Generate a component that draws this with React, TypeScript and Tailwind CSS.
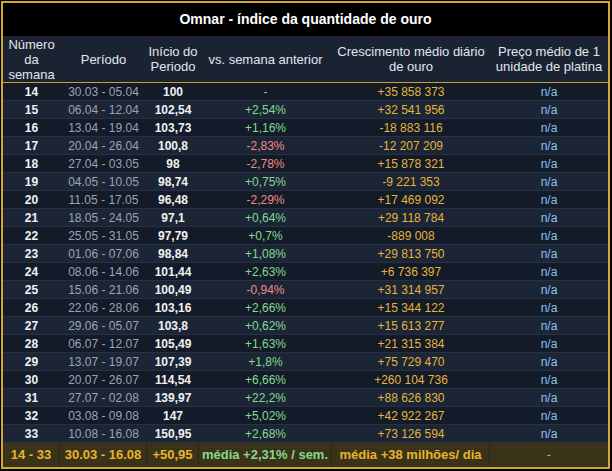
const rows: [string, string, string, string, string][] = [
  ["14", "30.03 - 05.04", "100", "-", "+35 858 373"],
  ["15", "06.04 - 12.04", "102,54", "+2,54%", "+32 541 956"],
  ["16", "13.04 - 19.04", "103,73", "+1,16%", "-18 883 116"],
  ["17", "20.04 - 26.04", "100,8", "-2,83%", "-12 207 209"],
  ["18", "27.04 - 03.05", "98", "-2,78%", "+15 878 321"],
  ["19", "04.05 - 10.05", "98,74", "+0,75%", "-9 221 353"],
  ["20", "11.05 - 17.05", "96,48", "-2,29%", "+17 469 092"],
  ["21", "18.05 - 24.05", "97,1", "+0,64%", "+29 118 784"],
  ["22", "25.05 - 31.05", "97,79", "+0,7%", "-889 008"],
  ["23", "01.06 - 07.06", "98,84", "+1,08%", "+29 813 750"],
  ["24", "08.06 - 14.06", "101,44", "+2,63%", "+6 736 397"],
  ["25", "15.06 - 21.06", "100,49", "-0,94%", "+31 314 957"],
  ["26", "22.06 - 28.06", "103,16", "+2,66%", "+15 344 122"],
  ["27", "29.06 - 05.07", "103,8", "+0,62%", "+15 613 277"],
  ["28", "06.07 - 12.07", "105,49", "+1,63%", "+21 315 384"],
  ["29", "13.07 - 19.07", "107,39", "+1,8%", "+75 729 470"],
  ["30", "20.07 - 26.07", "114,54", "+6,66%", "+260 104 736"],
  ["31", "27.07 - 02.08", "139,97", "+22,2%", "+88 626 830"],
  ["32", "03.08 - 09.08", "147", "+5,02%", "+42 922 267"],
  ["33", "10.08 - 16.08", "150,95", "+2,68%", "+73 126 594"],
];

const cols = "grid grid-cols-[57px_87px_52px_133px_158px_118px]";

function changeColor(v: string) {
  if (v === "-") return "text-[#86d98f]";
  return v.startsWith("-") ? "text-[#f08a80]" : "text-[#86d98f]";
}

export default function App() {
  return (
    <div
      className="w-[612px] h-[471px] bg-black pt-px pl-px"
      style={{ fontFamily: '"Liberation Sans", Arial, sans-serif' }}
    >
      <div className="w-[609px] h-[468px] border-2 border-[#d2a631] bg-[#131a28] flex flex-col">
        {/* Title */}
        <div className="h-[33px] bg-black flex items-center justify-center text-[14px] font-bold text-white">
          Omnar - índice da quantidade de ouro
        </div>

        {/* Header */}
        <div className={`${cols} h-[47px] bg-[#1b2333] border-b border-[#c9a02e] text-[13px] leading-[15px] text-[#e2e6ec] text-center items-center`}>
          <div>Número<br />da<br />semana</div>
          <div>Período</div>
          <div>Início do<br />Periodo</div>
          <div>vs. semana anterior</div>
          <div>Crescimento médio diário<br />de ouro</div>
          <div>Preço médio de 1<br />unidade de platina</div>
        </div>

        {/* Data rows */}
        {rows.map((r, i) => (
          <div
            key={r[0]}
            className={`${cols} h-[18px] text-[12px] text-center items-center border-b border-[#273143] ${
              i % 2 === 0 ? "bg-[#131a28]" : "bg-[#1b2536]"
            }`}
          >
            <div className="font-bold text-[#f2f2f2]">{r[0]}</div>
            <div className="text-[#9ba4b3]">{r[1]}</div>
            <div className="font-bold text-[#f2f2f2]">{r[2]}</div>
            <div className={changeColor(r[3])}>{r[3]}</div>
            <div className="text-[#e5b43a]">{r[4]}</div>
            <div className="text-[#8cc4f0]">n/a</div>
          </div>
        ))}

        {/* Footer */}
        <div className={`${cols} flex-1 bg-[#3a3219] text-[13px] font-bold text-center`}>
          <div className="flex items-center justify-center border-r border-[#2b2513] text-[#e8b52a]">14 - 33</div>
          <div className="flex items-center justify-center border-r border-[#2b2513] text-[#e8b52a]">30.03 - 16.08</div>
          <div className="flex items-center justify-center border-r border-[#2b2513] text-[#e8b52a] whitespace-nowrap">+50,95</div>
          <div className="flex items-center justify-center border-r border-[#2b2513] text-[#86d98f] whitespace-nowrap">média +2,31% / sem.</div>
          <div className="flex items-center justify-center border-r border-[#2b2513] text-[#e8b52a] whitespace-nowrap">média +38 milhões/ dia</div>
          <div className="flex items-center justify-center font-normal text-[#b8b0a0]">-</div>
        </div>
      </div>
    </div>
  );
}
